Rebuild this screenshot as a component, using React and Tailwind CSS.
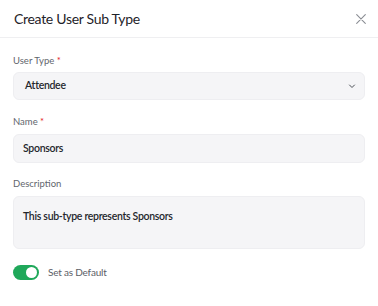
import React from "react";

export default function App() {
  return (
    <div className="w-[378px] h-[306px] bg-white overflow-hidden" style={{ fontFamily: "Lato, 'Noto Sans', sans-serif" }}>
      <div className="h-[38px] pl-[14px] pr-[12px] flex items-center justify-between border-b border-[#efeff1]">
        <div className="text-[14px] tracking-[-0.3px] text-[#1f2329] leading-none pt-[1px]">Create User Sub Type</div>
        <svg width="10" height="10" viewBox="0 0 10 10">
          <path d="M0.7 0.7L9.3 9.3M9.3 0.7L0.7 9.3" stroke="#8a8d93" strokeWidth="1.1" strokeLinecap="round" />
        </svg>
      </div>
      <div className="px-[13px] pt-[15px]">
        <div className="text-[9.5px] leading-[16px] text-[#62666d]">
          User Type <span className="text-[#e5252a]">*</span>
        </div>
        <div className="mt-[3px] h-[28px] rounded-[6px] bg-[#f5f5f7] border border-[#eeeef1] flex items-center justify-between pl-[11px] pr-[8px]">
          <span className="text-[10.5px] font-semibold tracking-[-0.3px] text-[#24272c]">Attendee</span>
          <svg width="8" height="8" viewBox="0 0 8 8">
            <path d="M1.5 3L4 5.5L6.5 3" stroke="#4b4f56" strokeWidth="1" fill="none" strokeLinecap="round" strokeLinejoin="round" />
          </svg>
        </div>
        <div className="mt-[14px] text-[9.5px] leading-[16px] text-[#62666d]">
          Name <span className="text-[#e5252a]">*</span>
        </div>
        <div className="mt-[4px] h-[29px] rounded-[6px] bg-[#f5f5f7] border border-[#eeeef1] flex items-center pl-[9px]">
          <span className="text-[10.5px] font-semibold tracking-[-0.3px] text-[#24272c]">Sponsors</span>
        </div>
        <div className="mt-[13px] text-[9.5px] leading-[16px] text-[#62666d]">Description</div>
        <div className="mt-[4px] h-[53px] rounded-[6px] bg-[#f5f5f7] border border-[#eeeef1] pl-[9px] pt-[5px]">
          <span className="text-[10.5px] font-semibold tracking-[-0.3px] text-[#24272c]">This sub-type represents Sponsors</span>
        </div>
        <div className="mt-[16px] flex items-center gap-[9px]">
          <div className="w-[26px] h-[15px] rounded-full bg-[#1fa85a] flex items-center justify-end pr-[2px]">
            <div className="w-[11px] h-[11px] rounded-full bg-white" />
          </div>
          <span className="text-[10px] tracking-[-0.2px] text-[#5c6067]">Set as Default</span>
        </div>
      </div>
    </div>
  );
}
